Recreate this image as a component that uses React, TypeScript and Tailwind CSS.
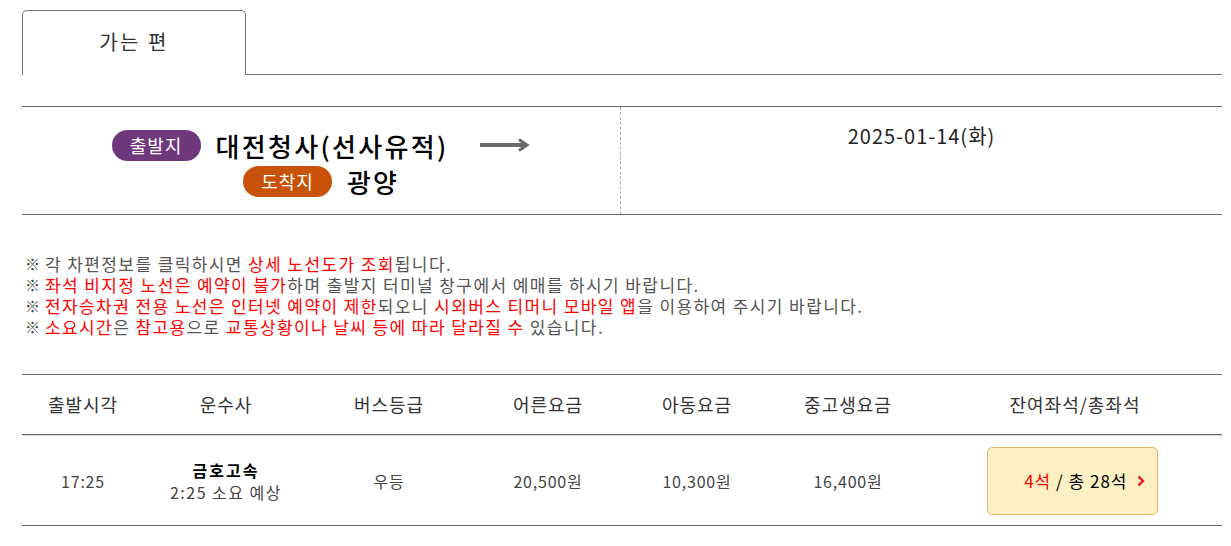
const notices: { t: string; red?: boolean }[][] = [
  [
    { t: '각 차편정보를 클릭하시면 ' },
    { t: '상세 노선도가 조회', red: true },
    { t: '됩니다.' },
  ],
  [
    { t: '좌석 비지정 노선은 예약이 불가', red: true },
    { t: '하며 출발지 터미널 창구에서 예매를 하시기 바랍니다.' },
  ],
  [
    { t: '전자승차권 전용 노선은 인터넷 예약이 제한', red: true },
    { t: '되오니 ' },
    { t: '시외버스 티머니 모바일 앱', red: true },
    { t: '을 이용하여 주시기 바랍니다.' },
  ],
  [
    { t: '소요시간', red: true },
    { t: '은 ' },
    { t: '참고용', red: true },
    { t: '으로 ' },
    { t: '교통상황이나 날씨 등에 따라 달라질 수', red: true },
    { t: ' 있습니다.' },
  ],
]

const headers = ['출발시각', '운수사', '버스등급', '어른요금', '아동요금', '중고생요금', '잔여좌석/총좌석']

const App = () => {
  return (
    <div className="w-[1231px] h-[546px] bg-white font-['Noto_Sans_CJK_KR',sans-serif] text-[#333] overflow-hidden">
      <div className="pl-[22px] pr-[9px] pt-[10px]">
        {/* tab */}
        <div className="flex items-end">
          <div className="w-[224px] h-[65px] border border-b-0 border-[#777] rounded-t-[5px] flex items-center justify-center text-[20px] tracking-[2.5px] text-[#333] pb-[2px]">
            가는 편
          </div>
          <div className="flex-1 border-b border-[#777]" />
        </div>

        {/* route */}
        <div className="mt-[31px] flex h-[109px] border-y border-[#666]">
          <div className="w-[599px] border-r border-dashed border-[#aaa] flex flex-col items-center pt-[22px] gap-[4px]">
            <div className="flex items-center h-[32px]">
              <span className="w-[89px] h-[31px] rounded-full bg-[#70387c] text-white text-[18px] tracking-[1px] flex items-center justify-center">
                출발지
              </span>
              <span className="ml-[15px] text-[26px] font-medium text-black tracking-[2.3px]">대전청사(선사유적)</span>
              <svg className="ml-[31px]" width="51" height="14" viewBox="0 0 51 14">
                <path d="M1 7h46" stroke="#6b6b6b" strokeWidth="4" />
                <path d="M40 1.5l8 5.5-8 5.5" fill="none" stroke="#6b6b6b" strokeWidth="3" />
              </svg>
            </div>
            <div className="flex items-center h-[32px]">
              <span className="w-[89px] h-[31px] rounded-full bg-[#c85209] text-white text-[18px] tracking-[1px] flex items-center justify-center">
                도착지
              </span>
              <span className="ml-[15px] text-[26px] font-medium text-black tracking-[2px]">광양</span>
            </div>
          </div>
          <div className="flex-1 flex justify-center pt-[14px] text-[20px] tracking-[1px] text-[#222]">2025-01-14(화)</div>
        </div>

        {/* notices */}
        <div className="mt-[38px] pl-[3px] text-[17px] leading-[21px] tracking-[1.4px] text-[#555]">
          {notices.map((line, i) => (
            <div key={i} className="flex whitespace-pre">
              <span className="w-[20px] shrink-0 text-[15px] font-bold text-[#444] tracking-normal">※</span>
              <span>
                {line.map((s, j) => (
                  <span key={j} className={s.red ? 'text-[#ff0000]' : ''}>
                    {s.t}
                  </span>
                ))}
              </span>
            </div>
          ))}
        </div>

        {/* table */}
        <div className="mt-[37px]">
          <div className="grid grid-cols-[122px_164px_162px_156px_142px_160px_1fr] h-[61px] border-y border-[#666] items-center text-[18px] tracking-[1px] text-[#333]">
            {headers.map((h) => (
              <div key={h} className="text-center">
                {h}
              </div>
            ))}
          </div>
          <div className="grid grid-cols-[122px_164px_162px_156px_142px_160px_1fr] h-[91px] border-t border-[#ddd] border-b-[#666] border-b items-center text-[16px] tracking-[0.8px] text-[#444]">
            <div className="text-center">17:25</div>
            <div className="flex flex-col items-center leading-[22px]">
              <span className="font-bold text-black tracking-[2px]">금호고속</span>
              <span className="tracking-[1.5px]">2:25 소요 예상</span>
            </div>
            <div className="text-center">우등</div>
            <div className="text-center">20,500원</div>
            <div className="text-center">10,300원</div>
            <div className="text-center">16,400원</div>
            <div className="flex justify-center pr-[6px]">
              <div className="w-[171px] h-[68px] rounded-[5px] border border-[#f5b26b] bg-[#fdf0c4] flex items-center justify-end pr-[12px] gap-[9px] text-[17px] tracking-[1px] text-black">
                <span>
                  <span className="text-[#ff0000]">4석</span> / 총 28석
                </span>
                <svg width="8" height="12" viewBox="0 0 8 12">
                  <path d="M1.5 1.5L6 6l-4.5 4.5" fill="none" stroke="#e8262b" strokeWidth="2.5" />
                </svg>
              </div>
            </div>
          </div>
        </div>
      </div>
    </div>
  )
}

export default App
